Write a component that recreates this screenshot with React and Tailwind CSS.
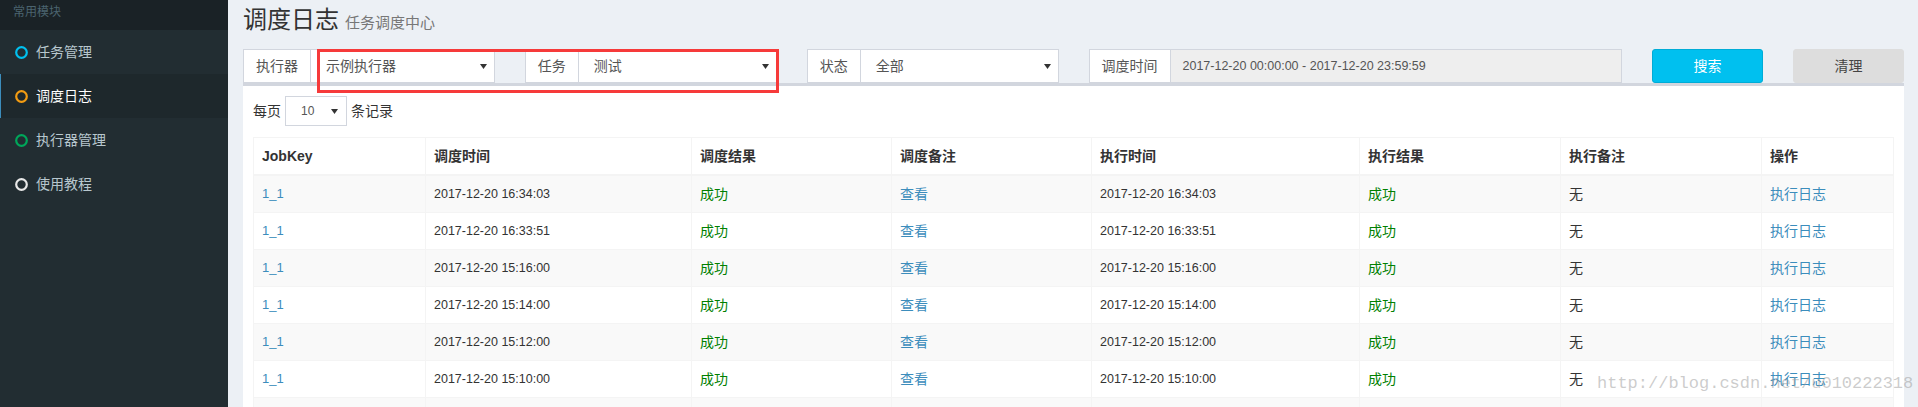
import React from "react";

const menu = [
  { name: "任务管理", ring: "#00c0ef" },
  { name: "调度日志", ring: "#f39c12", active: true },
  { name: "执行器管理", ring: "#00a65a" },
  { name: "使用教程", ring: "#e8e8e8" },
];

const rows = [
  "2017-12-20 16:34:03",
  "2017-12-20 16:33:51",
  "2017-12-20 15:16:00",
  "2017-12-20 15:14:00",
  "2017-12-20 15:12:00",
  "2017-12-20 15:10:00",
];

const cols = [
  { title: "JobKey", w: "w-[172px]" },
  { title: "调度时间", w: "w-[266px]" },
  { title: "调度结果", w: "w-[200px]" },
  { title: "调度备注", w: "w-[200px]" },
  { title: "执行时间", w: "w-[268px]" },
  { title: "执行结果", w: "w-[201px]" },
  { title: "执行备注", w: "w-[201px]" },
  { title: "操作", w: "w-[132px]" },
];

const Ring = ({ color }) => (
  <svg width="13" height="13" viewBox="0 0 13 13" className="shrink-0">
    <circle cx="6.5" cy="6.5" r="5.3" fill="none" stroke={color} strokeWidth="2.2" />
  </svg>
);

const Caret = () => (
  <svg width="7" height="5" viewBox="0 0 7 5" className="shrink-0">
    <polygon points="0,0 7,0 3.5,5" fill="#333" />
  </svg>
);

const Group = ({ label, value, span }) => (
  <div className={`${span} px-[15px]`}>
    <div className="flex h-[34px]">
      <span className="flex items-center border border-r-0 border-[#d2d6de] bg-white px-[12px] text-[14px] text-[#555]">
        {label}
      </span>
      <div className="flex flex-1 items-center justify-between border border-[#d2d6de] bg-white pl-[15px] pr-[7px] text-[14px] text-[#555]">
        <span>{value}</span>
        <Caret />
      </div>
    </div>
  </div>
);

const cell = "border border-[#f4f4f4] px-[8px] py-[8px] leading-[20px]";

const App = () => {
  return (
    <div className="relative flex h-[407px] w-[1918px] overflow-hidden font-['Liberation_Sans','Noto_Sans_CJK_SC',sans-serif]">
      <aside className="w-[228px] shrink-0 bg-[#222d32]">
        <div className="h-[30px] bg-[#1a2226] pl-[13px] text-[12px] leading-[25px] text-[#4b646f]">常用模块</div>
        {menu.map((m) => (
          <div
            key={m.name}
            className={`flex h-[44px] items-center gap-[8px] text-[14px] ${
              m.active
                ? "border-l border-[#3c8dbc] bg-[#1e282c] pl-[14px] text-white"
                : "pl-[15px] text-[#b8c7ce]"
            }`}
          >
            <Ring color={m.ring} />
            <span>{m.name}</span>
          </div>
        ))}
      </aside>

      <main className="flex-1 bg-[#ecf0f5]">
        <div className="flex h-[49px] items-baseline px-[15px] pt-[7px]">
          <h1 className="text-[24px] leading-[26px] text-[#333]">调度日志</h1>
          <small className="ml-[6px] text-[15px] text-[#777]">任务调度中心</small>
        </div>

        <div className="grid h-[34px] grid-cols-12">
          <Group label="执行器" value="示例执行器" span="col-span-2" />
          <Group label="任务" value="测试" span="col-span-2" />
          <Group label="状态" value="全部" span="col-span-2" />
          <div className="col-span-4 px-[15px]">
            <div className="flex h-[34px]">
              <span className="flex items-center border border-r-0 border-[#d2d6de] bg-white px-[12px] text-[14px] text-[#555]">
                调度时间
              </span>
              <div className="flex flex-1 items-center border border-[#d2d6de] bg-[#eee] pl-[12px] text-[12.5px] text-[#555]">
                2017-12-20 00:00:00 - 2017-12-20 23:59:59
              </div>
            </div>
          </div>
          <div className="col-span-1 px-[15px]">
            <button className="h-[34px] w-full rounded-[3px] border border-[#00acd6] bg-[#00c0ef] text-[14px] text-white">
              搜索
            </button>
          </div>
          <div className="col-span-1 px-[15px]">
            <button className="h-[34px] w-full rounded-[3px] border border-[#ddd] bg-[#ddd] text-[14px] text-[#444]">
              清理
            </button>
          </div>
        </div>

        <section className="mx-[15px] border-t-[3px] border-[#d2d6de] bg-white p-[10px]">
          <div className="mb-[11px] flex h-[30px] items-center text-[14px] text-[#333]">
            <span>每页</span>
            <div className="mx-[4px] flex h-[30px] w-[62px] items-center justify-between border border-[#d2d6de] pl-[15px] pr-[8px] text-[12px] text-[#555]">
              <span>10</span>
              <Caret />
            </div>
            <span>条记录</span>
          </div>

          <table className="w-[1640px] table-fixed border-collapse text-[14px] text-[#333]">
            <thead>
              <tr>
                {cols.map((c) => (
                  <th
                    key={c.title}
                    className={`${c.w} border border-b-2 border-[#f4f4f4] px-[8px] py-[8px] text-left font-bold leading-[20px]`}
                  >
                    {c.title}
                  </th>
                ))}
              </tr>
            </thead>
            <tbody>
              {rows.map((t, i) => (
                <tr key={t} className={i % 2 === 0 ? "bg-[#f9f9f9]" : "bg-white"}>
                  <td className={`${cell} text-[13px] text-[#3c8dbc]`}>1_1</td>
                  <td className={`${cell} text-[12.5px]`}>{t}</td>
                  <td className={`${cell} text-[#008000]`}>成功</td>
                  <td className={`${cell} text-[#3c8dbc]`}>查看</td>
                  <td className={`${cell} text-[12.5px]`}>{t}</td>
                  <td className={`${cell} text-[#008000]`}>成功</td>
                  <td className={cell}>无</td>
                  <td className={`${cell} text-[#3c8dbc]`}>执行日志</td>
                </tr>
              ))}
              {/* next row, only its top edge shows in the viewport */}
              <tr className="h-[37px] bg-[#f9f9f9]">
                {cols.map((c) => (
                  <td key={c.title} className="border border-[#f4f4f4]" />
                ))}
              </tr>
            </tbody>
          </table>
        </section>
      </main>

      {/* annotation box drawn over the screenshot */}
      <div className="pointer-events-none absolute left-[317px] top-[49px] h-[44px] w-[462px] border-[3px] border-[#f63a3a]" />

      <div className="pointer-events-none absolute left-[1597px] top-[373px] font-['Liberation_Mono',monospace] text-[17px] leading-[22px] text-[#9a9a9a]/50">
        http://blog.csdn.net/u010222318
      </div>
    </div>
  );
};

export default App;
